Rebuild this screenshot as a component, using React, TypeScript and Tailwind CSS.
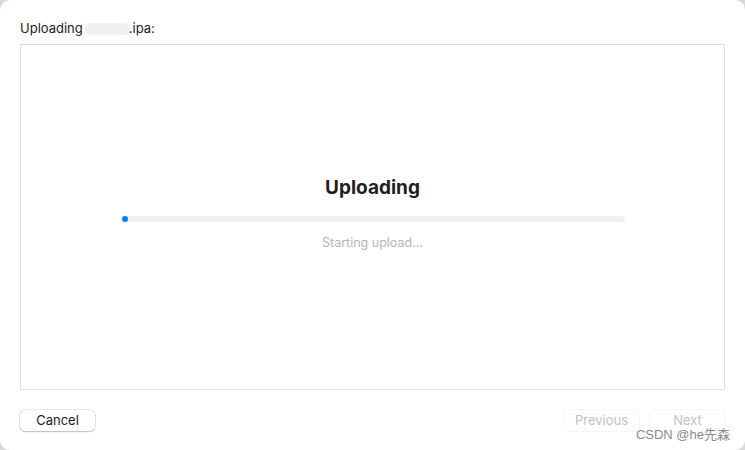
import React from 'react';

const font = { fontFamily: '"Inter", "Liberation Sans", "Noto Sans CJK SC", sans-serif' };

export default function App() {
  return (
    <div className="w-[745px] h-[450px] bg-[#d9d9d9] overflow-hidden" style={font}>
      <div className="relative w-full h-full bg-white rounded-[10px] flex flex-col px-5">
        {/* header */}
        <div className="h-[44px] flex items-center pt-[14px] text-[13px] text-[#222]">
          <span>Uploading</span>
          <span className="ml-[2px] inline-block w-[44px] h-[12px] rounded-sm bg-[#f0f0f0]" />
          <span>.ipa:</span>
        </div>

        {/* panel */}
        <div className="h-[346px] border border-[#dedede] flex flex-col items-center">
          <div className="mt-[130px] text-[19px] font-bold text-[#1f1f1f] leading-[26px]">Uploading</div>
          <div className="mt-[15px] w-[504px] h-[6px] rounded-full bg-[#f0f0f0] relative">
            <div className="absolute left-[1px] top-0 w-[6px] h-[6px] rounded-full bg-[#0a7cff]" />
          </div>
          <div className="mt-[12px] text-[12.5px] text-[#b5b5b5]">Starting upload...</div>
        </div>

        {/* footer */}
        <div className="flex items-center justify-between mt-[20px]">
          <button className="w-[75px] h-[21px] rounded-[5px] bg-white text-[13px] text-[#222] shadow-[0_0_0_0.5px_rgba(0,0,0,0.18),0_1px_1.5px_rgba(0,0,0,0.18)]">
            Cancel
          </button>
          <div className="flex gap-[11px]">
            <button className="w-[75px] h-[21px] rounded-[5px] bg-white text-[13px] text-[#c2c2c2] shadow-[0_0_0_0.5px_rgba(0,0,0,0.08)]">
              Previous
            </button>
            <button className="w-[75px] h-[21px] rounded-[5px] bg-white text-[13px] text-[#c2c2c2] shadow-[0_0_0_0.5px_rgba(0,0,0,0.08)]">
              Next
            </button>
          </div>
        </div>

        <div className="absolute right-[15px] bottom-[6px] text-[13px] text-[#8a8a8a]" style={{ fontFamily: '"Liberation Sans", "Noto Sans CJK SC", sans-serif' }}>
          CSDN @he先森
        </div>
      </div>
    </div>
  );
}
